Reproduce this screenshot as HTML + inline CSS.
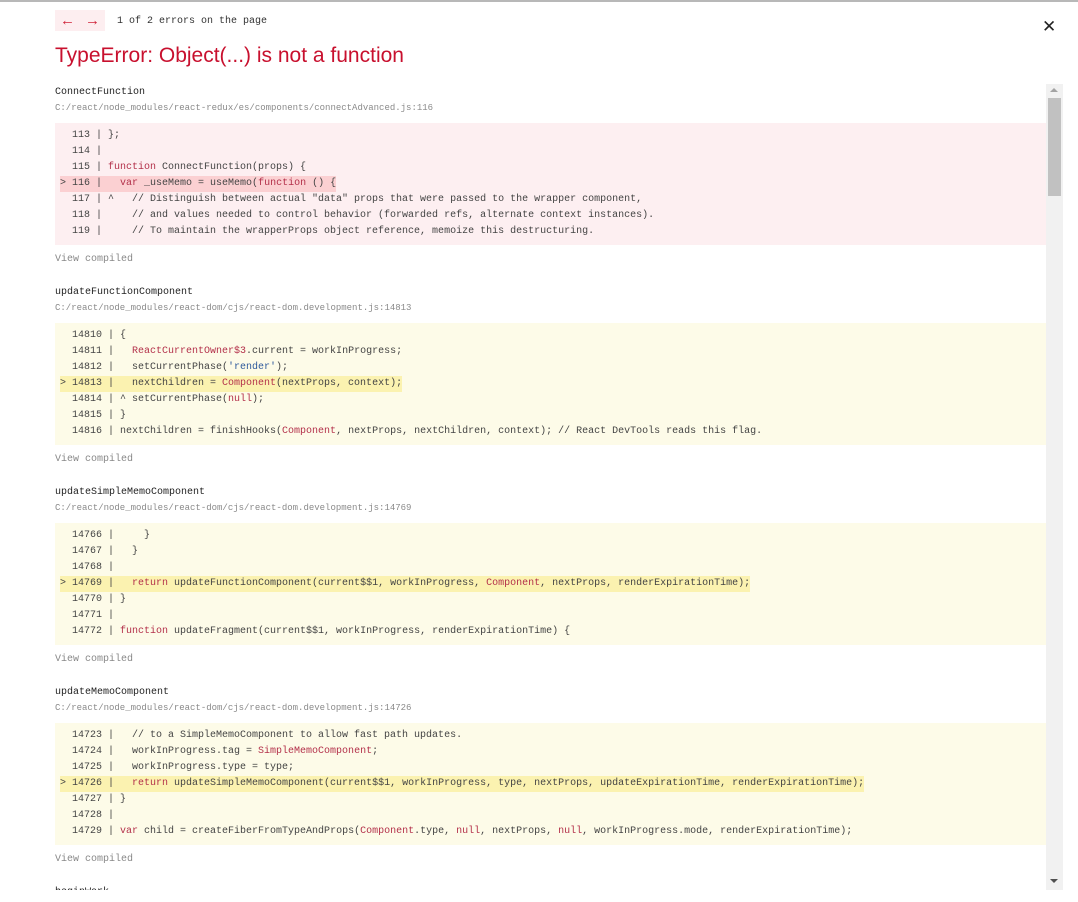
<!DOCTYPE html>
<html><head><meta charset="utf-8"><style>
*{margin:0;padding:0;box-sizing:border-box}
body{width:1078px;height:902px;background:#fff;overflow:hidden;position:relative;font-family:"Liberation Sans",sans-serif}
.top{position:absolute;left:0;top:0;width:1078px;height:2px;background:#b8b8b8}
.nav{position:absolute;left:55px;top:10px;width:50px;height:21px;background:#fdeef0}
.nav span{position:absolute;top:2px;font-size:15px;color:#d0243a}
.cnt{position:absolute;left:117px;top:16px;font:10px "Liberation Mono",monospace;color:#333}
.x{position:absolute;left:1042px;top:17px;font-size:17px;color:#222}
h1{position:absolute;left:55px;top:44px;font-weight:normal;font-size:21px;color:#c8102e;white-space:nowrap}
.scroll{position:absolute;left:55px;top:84px;width:1008px;height:806px;overflow:hidden}
.sb{position:absolute;left:1046px;top:84px;width:17px;height:806px;background:#f1f1f1}
.th{position:absolute;left:1048px;top:98px;width:13px;height:98px;background:#c1c1c1}
.au{position:absolute;left:1050px;top:88px;width:0;height:0;border-left:4px solid transparent;border-right:4px solid transparent;border-bottom:4px solid #a3a3a3}
.ad{position:absolute;left:1050px;top:879px;width:0;height:0;border-left:4px solid transparent;border-right:4px solid transparent;border-top:4px solid #505050}
.fr{position:absolute;left:0;width:991px}
.nm{position:absolute;left:0;top:3px;font:10px "Liberation Mono",monospace;color:#222;white-space:pre}
.fl{position:absolute;left:0;top:19px;font:9px "Liberation Mono",monospace;color:#8a8a8a;white-space:pre}
.code{position:absolute;left:0;top:39px;width:991px;height:122px;padding:5px 0 0 5px}
.red{background:#fdeff1}.yel{background:#fdfbe8}
.code div{font:10px/16px "Liberation Mono",monospace;color:#444;white-space:pre;height:16px}
.hr{background:#fbd0d2}.hy{background:#fbf2b0}
.hl{display:inline-block}
.k{color:#b3304a}.s{color:#2f5a9c}
.vc{position:absolute;left:0;top:170px;font:10px "Liberation Mono",monospace;color:#888}
</style></head><body>
<div class="top"></div>
<div class="nav"><span style="left:5px">←</span><span style="left:30px">→</span></div>
<div class="cnt">1 of 2 errors on the page</div>
<div class="x">✕</div>
<h1>TypeError: Object(...) is not a function</h1>
<div class="scroll">
<div class="fr" style="top:0">
<div class="nm">ConnectFunction</div>
<div class="fl">C:/react/node_modules/react-redux/es/components/connectAdvanced.js:116</div>
<div class="code red">
<div>  113 | };</div>
<div>  114 |</div>
<div>  115 | <span class="k">function</span> ConnectFunction(props) {</div>
<div><span class="hl hr">&gt; 116 |   <span class="k">var</span> _useMemo = useMemo(<span class="k">function</span> () {</span></div>
<div>  117 | ^   // Distinguish between actual "data" props that were passed to the wrapper component,</div>
<div>  118 |     // and values needed to control behavior (forwarded refs, alternate context instances).</div>
<div>  119 |     // To maintain the wrapperProps object reference, memoize this destructuring.</div>
</div>
<div class="vc">View compiled</div>
</div>
<div class="fr" style="top:200px">
<div class="nm">updateFunctionComponent</div>
<div class="fl">C:/react/node_modules/react-dom/cjs/react-dom.development.js:14813</div>
<div class="code yel">
<div>  14810 | {</div>
<div>  14811 |   <span class="k">ReactCurrentOwner$3</span>.current = workInProgress;</div>
<div>  14812 |   setCurrentPhase(<span class="s">'render'</span>);</div>
<div><span class="hl hy">&gt; 14813 |   nextChildren = <span class="k">Component</span>(nextProps, context);</span></div>
<div>  14814 | ^ setCurrentPhase(<span class="k">null</span>);</div>
<div>  14815 | }</div>
<div>  14816 | nextChildren = finishHooks(<span class="k">Component</span>, nextProps, nextChildren, context); // React DevTools reads this flag.</div>
</div>
<div class="vc">View compiled</div>
</div>
<div class="fr" style="top:400px">
<div class="nm">updateSimpleMemoComponent</div>
<div class="fl">C:/react/node_modules/react-dom/cjs/react-dom.development.js:14769</div>
<div class="code yel">
<div>  14766 |     }</div>
<div>  14767 |   }</div>
<div>  14768 |</div>
<div><span class="hl hy">&gt; 14769 |   <span class="k">return</span> updateFunctionComponent(current$$1, workInProgress, <span class="k">Component</span>, nextProps, renderExpirationTime);</span></div>
<div>  14770 | }</div>
<div>  14771 |</div>
<div>  14772 | <span class="k">function</span> updateFragment(current$$1, workInProgress, renderExpirationTime) {</div>
</div>
<div class="vc">View compiled</div>
</div>
<div class="fr" style="top:600px">
<div class="nm">updateMemoComponent</div>
<div class="fl">C:/react/node_modules/react-dom/cjs/react-dom.development.js:14726</div>
<div class="code yel">
<div>  14723 |   // to a SimpleMemoComponent to allow fast path updates.</div>
<div>  14724 |   workInProgress.tag = <span class="k">SimpleMemoComponent</span>;</div>
<div>  14725 |   workInProgress.type = type;</div>
<div><span class="hl hy">&gt; 14726 |   <span class="k">return</span> updateSimpleMemoComponent(current$$1, workInProgress, type, nextProps, updateExpirationTime, renderExpirationTime);</span></div>
<div>  14727 | }</div>
<div>  14728 |</div>
<div>  14729 | <span class="k">var</span> child = createFiberFromTypeAndProps(<span class="k">Component</span>.type, <span class="k">null</span>, nextProps, <span class="k">null</span>, workInProgress.mode, renderExpirationTime);</div>
</div>
<div class="vc">View compiled</div>
</div>
<div class="fr" style="top:800px">
<div class="nm">beginWork</div>
</div>
</div>
<div class="sb"></div><div class="th"></div><div class="au"></div><div class="ad"></div>
</body></html>
